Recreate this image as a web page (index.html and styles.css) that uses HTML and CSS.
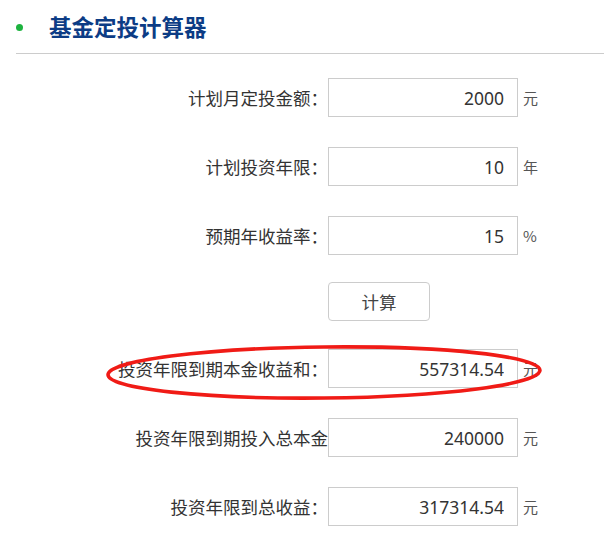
FILE: index.html
```html
<!DOCTYPE html>
<html lang="zh-CN">
<head>
<meta charset="utf-8">
<title>基金定投计算器</title>
<link rel="stylesheet" href="styles.css">
</head>
<body>
<div class="page">
  <div class="header">
    <span class="bullet"></span>
    <h1 class="title">基金定投计算器</h1>
  </div>
  <div class="form">
    <div class="row">
      <label class="label">计划月定投金额：</label>
      <input class="box" type="text" value="2000">
      <span class="unit">元</span>
    </div>
    <div class="row">
      <label class="label">计划投资年限：</label>
      <input class="box" type="text" value="10">
      <span class="unit">年</span>
    </div>
    <div class="row">
      <label class="label">预期年收益率：</label>
      <input class="box" type="text" value="15">
      <span class="unit">%</span>
    </div>
    <div class="row row-btn">
      <span class="label"></span>
      <button class="btn" type="button">计算</button>
    </div>
    <div class="row">
      <label class="label">投资年限到期本金收益和：</label>
      <input class="box" type="text" value="557314.54">
      <span class="unit">元</span>
    </div>
    <div class="row">
      <label class="label">投资年限到期投入总本金</label>
      <input class="box" type="text" value="240000">
      <span class="unit">元</span>
    </div>
    <div class="row">
      <label class="label">投资年限到总收益：</label>
      <input class="box" type="text" value="317314.54">
      <span class="unit">元</span>
    </div>
  </div>
  <svg class="mark" width="604" height="547" viewBox="0 0 604 547">
    <ellipse cx="324" cy="372.5" rx="216" ry="25.5" fill="none" stroke="#f01b16" stroke-width="3.6" transform="rotate(-0.6 324 372.5)"/>
  </svg>
</div>
</body>
</html>
```
FILE: styles.css
```css
html, body {
  margin: 0;
  padding: 0;
  background: #fff;
}
body {
  font-family: "Noto Sans CJK SC", "Noto Sans", sans-serif;
  color: #333;
}
.page {
  position: relative;
  width: 604px;
  height: 547px;
  overflow: hidden;
}
.header {
  margin-left: 16px;
  height: 53px;
  border-bottom: 1px solid #cccccc;
  display: flex;
  align-items: center;
}
.bullet {
  width: 7px;
  height: 7px;
  border-radius: 50%;
  background: #1db33f;
  margin-top: 1px;
}
.title {
  margin: 0 0 0 26px;
  font-size: 22.5px;
  font-weight: 700;
  color: #0c3c85;
  line-height: 1;
}
.form {
  margin-top: 24px;
  padding-left: 108px;
  display: flex;
  flex-direction: column;
}
.row {
  display: flex;
  align-items: center;
  height: 39px;
  margin-bottom: 30px;
}
.row-btn {
  margin-top: -3px;
  margin-bottom: 28px;
}
.label {
  flex: none;
  width: 220px;
  text-align: right;
  font-size: 17.5px;
  color: #333;
  white-space: nowrap;
}
.box {
  flex: none;
  box-sizing: border-box;
  width: 190px;
  height: 39px;
  margin: 0;
  border: 1px solid #cccccc;
  padding: 0 13px 0 6px;
  text-align: right;
  font-family: "Noto Sans", "Noto Sans CJK SC", sans-serif;
  font-size: 17.5px;
  color: #333;
  background: #fff;
  outline: none;
}
.unit {
  margin-left: 5px;
  font-size: 15px;
  color: #555;
}
.btn {
  box-sizing: border-box;
  width: 102px;
  height: 39px;
  border: 1px solid #cccccc;
  border-radius: 4px;
  background: #fff;
  font-family: "Noto Sans CJK SC", sans-serif;
  font-size: 17.5px;
  color: #444;
  padding: 0;
}
.mark {
  position: absolute;
  left: 0;
  top: 0;
  pointer-events: none;
}
```
